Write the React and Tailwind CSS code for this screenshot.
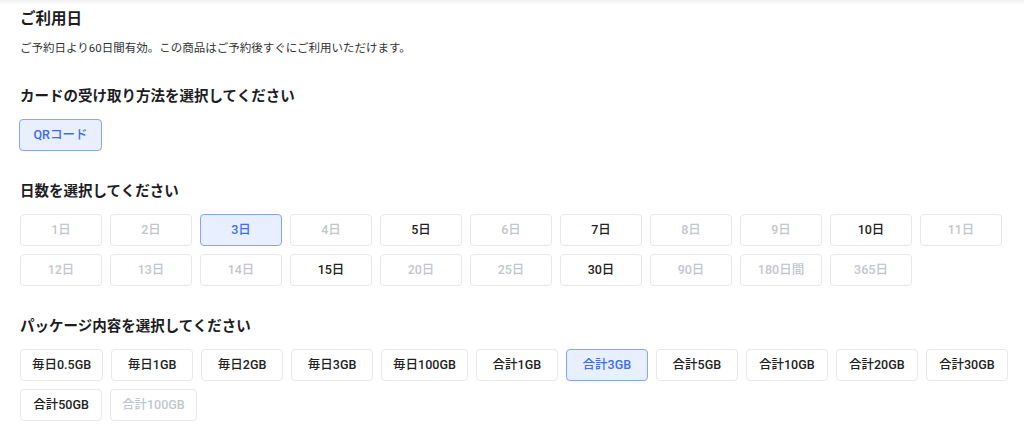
const days = [
  { label: "1日", state: "off" },
  { label: "2日", state: "off" },
  { label: "3日", state: "on" },
  { label: "4日", state: "off" },
  { label: "5日" },
  { label: "6日", state: "off" },
  { label: "7日" },
  { label: "8日", state: "off" },
  { label: "9日", state: "off" },
  { label: "10日" },
  { label: "11日", state: "off" },
  { label: "12日", state: "off" },
  { label: "13日", state: "off" },
  { label: "14日", state: "off" },
  { label: "15日" },
  { label: "20日", state: "off" },
  { label: "25日", state: "off" },
  { label: "30日" },
  { label: "90日", state: "off" },
  { label: "180日間", state: "off" },
  { label: "365日", state: "off" },
]

const packages = [
  { label: "毎日0.5GB" },
  { label: "毎日1GB" },
  { label: "毎日2GB" },
  { label: "毎日3GB" },
  { label: "毎日100GB" },
  { label: "合計1GB" },
  { label: "合計3GB", state: "on" },
  { label: "合計5GB" },
  { label: "合計10GB" },
  { label: "合計20GB" },
  { label: "合計30GB" },
  { label: "合計50GB" },
  { label: "合計100GB", state: "off" },
]

function Chip({ label, state }) {
  const look =
    state === "on"
      ? "bg-[#e8efff] border-[#86a5f7] text-[#3f6cf4]"
      : state === "off"
        ? "bg-white border-[#e6e8ec] text-[#c3c6cc]"
        : "bg-white border-[#e6e8ec] text-[#222]"
  return (
    <button
      className={
        "h-[32px] min-w-[82px] px-[11px] rounded-[4px] border text-[12.5px] font-medium leading-none whitespace-nowrap " +
        look
      }
    >
      {label}
    </button>
  )
}

export default function App() {
  return (
    <div
      className="w-[1024px] h-[432px] bg-white overflow-hidden"
      style={{ fontFamily: '"Roboto", "Noto Sans CJK JP", sans-serif' }}
    >
      {/* top shade */}
      <div className="h-[5px] bg-linear-to-b from-[#f1f1f1] to-white" />

      <div className="pl-5 pr-[8px]">
        {/* ご利用日 */}
        <section className="mt-[3px]">
          <h2 className="text-[15.5px] leading-[22px] font-bold text-[#1d1d1f]">ご利用日</h2>
          <p className="mt-[9px] text-[11.5px] leading-[18px] text-[#333]">
            ご予約日より60日間有効。この商品はご予約後すぐにご利用いただけます。
          </p>
        </section>

        {/* 受け取り方法 */}
        <section className="mt-[29px]">
          <h2 className="text-[14.5px] leading-[22px] font-bold text-[#1d1d1f]">
            カードの受け取り方法を選択してください
          </h2>
          <div className="mt-[11px] flex">
            <button className="h-[32px] w-[83px] -ml-px rounded-[4px] border border-[#86a5f7] bg-[#e8efff] text-[#3f6cf4] text-[12.5px] font-medium">
              QRコード
            </button>
          </div>
        </section>

        {/* 日数 */}
        <section className="mt-[30px]">
          <h2 className="text-[14.5px] leading-[22px] font-bold text-[#1d1d1f]">日数を選択してください</h2>
          <div className="mt-[11px] flex flex-wrap gap-2">
            {days.map((d) => (
              <Chip key={d.label} {...d} />
            ))}
          </div>
        </section>

        {/* パッケージ */}
        <section className="mt-[30px]">
          <h2 className="text-[14.5px] leading-[22px] font-bold text-[#1d1d1f]">
            パッケージ内容を選択してください
          </h2>
          <div className="mt-[11px] flex flex-wrap gap-2">
            {packages.map((p) => (
              <Chip key={p.label} {...p} />
            ))}
          </div>
        </section>
      </div>
    </div>
  )
}
